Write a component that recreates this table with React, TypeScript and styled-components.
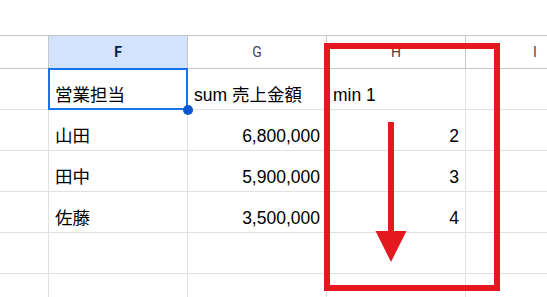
import React from 'react';
import styled, { createGlobalStyle } from 'styled-components';

const GlobalStyle = createGlobalStyle`
  html, body {
    margin: 0;
    padding: 0;
    background: #ffffff;
    overflow: hidden;
  }
  body {
    font-family: "Liberation Sans", "Noto Sans CJK JP", sans-serif;
  }
`;

const Page = styled.div`
  position: relative;
  width: 547px;
  height: 297px;
  overflow: hidden;
`;

const TopSpace = styled.div`
  height: 35px;
`;

const Grid = styled.div`
  display: grid;
  grid-template-columns: 49px 139px 139px 139px 139px;
  width: 605px;
`;

const HeaderCell = styled.div<{ $active?: boolean }>`
  height: 32px;
  border-top: 1px solid #c4c7c5;
  border-bottom: 1px solid #c4c7c5;
  border-right: 1px solid #c4c7c5;
  display: flex;
  align-items: center;
  justify-content: center;
  font-family: Roboto, "Liberation Sans", sans-serif;
  font-size: 14px;
  font-weight: ${p => (p.$active ? 700 : 400)};
  color: ${p => (p.$active ? '#041e49' : '#444746')};
  background: ${p => (p.$active ? '#d3e3fd' : '#ffffff')};
`;

const Cell = styled.div<{ $align?: 'left' | 'right' }>`
  position: relative;
  height: 40px;
  box-sizing: content-box;
  border-right: 1px solid #e1e1e1;
  border-bottom: 1px solid #e1e1e1;
  display: flex;
  align-items: flex-end;
  justify-content: ${p => (p.$align === 'right' ? 'flex-end' : 'flex-start')};
  padding: 0 6px 4px 6px;
  box-sizing: border-box;
  height: 41px;
  font-size: 17.5px;
  line-height: 20px;
  color: #000000;
  white-space: nowrap;
`;

const RowHead = styled(Cell)`
  padding: 0;
`;

const Selection = styled.div`
  position: absolute;
  left: -1px;
  top: -1px;
  right: -1px;
  bottom: -1px;
  border: 2px solid #1a73e8;
  pointer-events: none;
  z-index: 2;
`;

const FillHandle = styled.div`
  position: absolute;
  right: -6px;
  bottom: -6px;
  width: 10px;
  height: 10px;
  border-radius: 50%;
  background: #0b57d0;
  z-index: 3;
`;

const Annotation = styled.svg`
  position: absolute;
  left: 0;
  top: 0;
  z-index: 5;
  pointer-events: none;
`;

const columns = ['F', 'G', 'H', 'I'];

const rows: { name: string; sum: string; min: string }[] = [
  { name: '山田', sum: '6,800,000', min: '2' },
  { name: '田中', sum: '5,900,000', min: '3' },
  { name: '佐藤', sum: '3,500,000', min: '4' },
];

export default function App() {
  return (
    <Page>
      <GlobalStyle />
      <TopSpace />
      <Grid>
        <HeaderCell />
        {columns.map(c => (
          <HeaderCell key={c} $active={c === 'F'}>
            {c}
          </HeaderCell>
        ))}

        <RowHead />
        <Cell>
          営業担当
          <Selection />
          <FillHandle />
        </Cell>
        <Cell>sum 売上金額</Cell>
        <Cell>min 1</Cell>
        <Cell />

        {rows.map(r => (
          <React.Fragment key={r.name}>
            <RowHead />
            <Cell>{r.name}</Cell>
            <Cell $align="right">{r.sum}</Cell>
            <Cell $align="right">{r.min}</Cell>
            <Cell />
          </React.Fragment>
        ))}

        {[0, 1].map(i => (
          <React.Fragment key={i}>
            <RowHead />
            <Cell />
            <Cell />
            <Cell />
            <Cell />
          </React.Fragment>
        ))}
      </Grid>

      <Annotation width="547" height="297" viewBox="0 0 547 297">
        <rect x="327" y="46" width="170" height="242" fill="none" stroke="#e3191f" strokeWidth="6" />
        <rect x="388" y="122" width="6" height="112" fill="#e3191f" />
        <polygon points="375.5,231 406.5,231 391,262" fill="#e3191f" />
      </Annotation>
    </Page>
  );
}
